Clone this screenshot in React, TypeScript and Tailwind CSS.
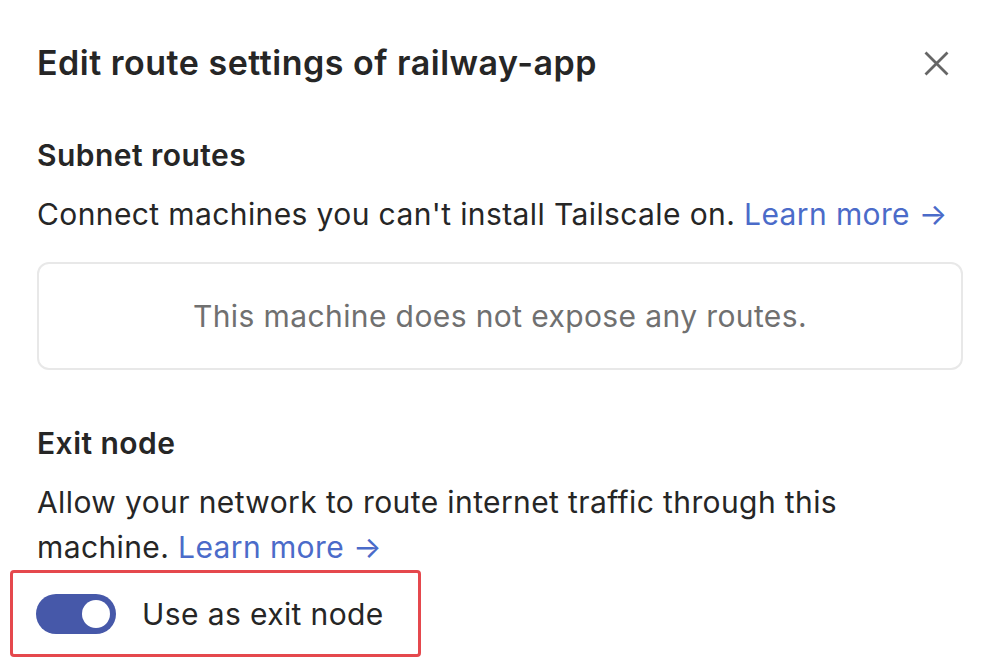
export default function App() {
  return (
    <div className="min-h-screen bg-white font-['Inter',sans-serif] text-[#262626]">
      <div className="pl-[37px] pr-[35px] pt-[39px]">
        <div className="flex items-center justify-between">
          <h1 className="text-[34px] font-semibold leading-[48px] tracking-[0.015em]">Edit route settings of railway-app</h1>
          <button className="mr-[14px] text-[#666]">
            <svg width="25" height="25" viewBox="0 0 25 25" fill="none" stroke="currentColor" strokeWidth="2.8">
              <path d="M1.5 1.5 L23.5 23.5 M23.5 1.5 L1.5 23.5" />
            </svg>
          </button>
        </div>

        {/* subnet routes */}
        <h2 className="mt-[48px] text-[30px] font-semibold leading-[40px] tracking-[0.015em]">Subnet routes</h2>
        <p className="mt-[17px] text-[30px] leading-[44px] tracking-[0.013em]">
          Connect machines you can't install Tailscale on.{' '}
          <a className="text-[#4b6bc9]">Learn more →</a>
        </p>
        <div className="mt-[26px] flex h-[108px] items-center justify-center rounded-[12px] border-2 border-[#e8e8e8] text-[30px] tracking-[0.013em] text-[#707070]">
          This machine does not expose any routes.
        </div>

        {/* exit node */}
        <h2 className="mt-[53px] text-[30px] font-semibold leading-[40px] tracking-[0.015em]">Exit node</h2>
        <p className="mt-[17px] text-[30px] leading-[45px] tracking-[0.013em]">
          Allow your network to route internet traffic through this machine.{' '}
          <a className="text-[#4b6bc9]">Learn more →</a>
        </p>
      </div>

      <div className="ml-[10px] inline-flex items-center gap-[26px] rounded-[4px] border-[3px] border-[#e5484d] pb-[20px] pl-[23px] pr-[34px] pt-[21px]">
        <div className="flex h-[40px] w-[80px] items-center justify-end rounded-full bg-[#4658a9] pr-[6px]">
          <div className="h-[28px] w-[28px] rounded-full bg-white" />
        </div>
        <span className="text-[30px] leading-[40px] tracking-[0.013em]">Use as exit node</span>
      </div>
    </div>
  )
}
